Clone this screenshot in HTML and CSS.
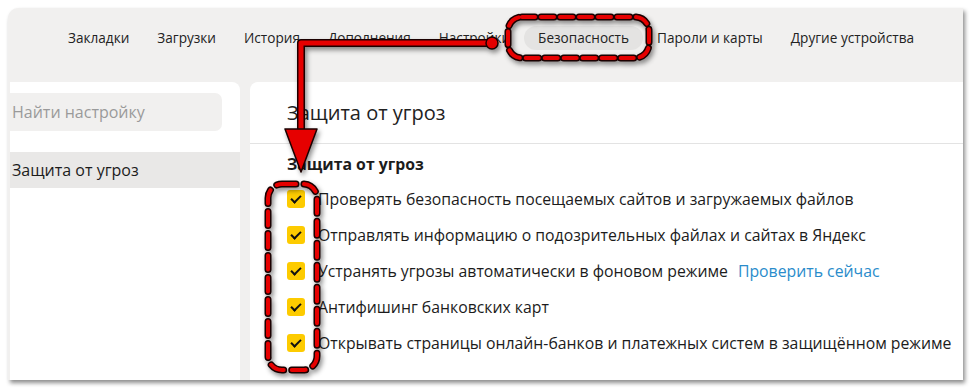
FILE: index.html
```html
<!DOCTYPE html>
<html lang="ru">

<head>
  <meta charset="utf-8">
  <title>Настройки — Безопасность</title>
  <link rel="stylesheet" href="styles.css">
</head>

<body>
  <div class="panel">
    <div class="nav">
      <span class="nav-item">Закладки</span>
      <span class="nav-item">Загрузки</span>
      <span class="nav-item">История</span>
      <span class="nav-item">Дополнения</span>
      <span class="nav-item">Настройки</span>
      <span class="nav-item active">Безопасность</span>
      <span class="nav-item">Пароли и карты</span>
      <span class="nav-item">Другие устройства</span>
    </div>

    <div class="content">
      <div class="sidebar">
        <div class="search">Найти настройку</div>
        <div class="side-item selected">Защита от угроз</div>
      </div>

      <div class="main">
        <div class="page-title">Защита от угроз</div>
        <div class="section">
          <div class="section-title">Защита от угроз</div>
          <div class="option"><span class="check"></span>Проверять безопасность посещаемых сайтов и загружаемых файлов</div>
          <div class="option"><span class="check"></span>Отправлять информацию о подозрительных файлах и сайтах в Яндекс</div>
          <div class="option"><span class="check"></span>Устранять угрозы автоматически в фоновом режиме<a class="link">Проверить сейчас</a></div>
          <div class="option"><span class="check"></span>Антифишинг банковских карт</div>
          <div class="option"><span class="check"></span>Открывать страницы онлайн-банков и платежных систем в защищённом режиме</div>
        </div>
      </div>
    </div>
  </div>

  <!-- red markup drawn over the screenshot -->
  <svg class="marks" width="973" height="390" viewBox="0 0 973 390">
    <defs>
      <filter id="shade" x="-20%" y="-20%" width="140%" height="140%">
        <feDropShadow dx="2" dy="3" stdDeviation="2.5" flood-color="#000" flood-opacity="0.45" />
      </filter>
    </defs>
    <g filter="url(#shade)" fill="none" stroke-linecap="round" stroke-linejoin="round">
      <rect x="508" y="17" width="141" height="41" rx="14" stroke="#1a0000" stroke-width="7" stroke-dasharray="13 6" />
      <rect x="508" y="17" width="141" height="41" rx="14" stroke="#e60000" stroke-width="4" stroke-dasharray="13 6" />

      <rect x="268" y="184" width="49" height="186" rx="14" stroke="#1a0000" stroke-width="7" stroke-dasharray="14 8" />
      <rect x="268" y="184" width="49" height="186" rx="14" stroke="#e60000" stroke-width="4" stroke-dasharray="14 8" />

      <path d="M492 43 H301 V132" stroke="#1a0000" stroke-width="8" />
      <path d="M492 43 H301 V132" stroke="#e60000" stroke-width="5" />
      <circle cx="492" cy="43" r="6" fill="#e60000" stroke="#1a0000" stroke-width="1.5" />
      <path d="M285 129 L317 129 L301 172 Z" fill="#e60000" stroke="#1a0000" stroke-width="1.5" />
    </g>
  </svg>
</body>

</html>
```

FILE: styles.css
```css
html,
body {
  margin: 0;
  padding: 0;
  background: #ffffff;
}

body {
  position: relative;
  width: 973px;
  height: 390px;
  overflow: hidden;
  font-family: "Open Sans", "Noto Sans", sans-serif;
  color: #1c1c1c;
}

.panel {
  margin: 8px 0 0 8px;
  width: 955px;
  height: 372px;
  background: #f1f0ef;
  border-top-left-radius: 10px;
  box-shadow: 2px 3px 4px rgba(0, 0, 0, 0.45);
  display: flex;
  flex-direction: column;
  overflow: hidden;
}

.nav {
  height: 74px;
  display: flex;
  align-items: flex-start;
  padding: 18px 0 0 46px;
  box-sizing: border-box;
  font-size: 13.6px;
}

.nav-item {
  padding: 0 14px;
  height: 24px;
  line-height: 24px;
  border-radius: 12px;
  color: #222;
  white-space: nowrap;
}

.nav-item.active {
  background: #e4e3e2;
}

.content {
  flex: 1;
  display: flex;
  gap: 10px;
  padding-left: 2px;
}

.sidebar {
  width: 230px;
  background: #ffffff;
  border-top-right-radius: 8px;
  padding-top: 11px;
}

.search {
  width: 210px;
  height: 38px;
  line-height: 38px;
  padding-left: 2px;
  background: #f1f0ef;
  border-radius: 0 7px 7px 0;
  color: #9a9a9a;
  font-size: 16px;
}

.side-item {
  margin-top: 21px;
  height: 36px;
  line-height: 36px;
  padding-left: 2px;
  font-size: 16px;
}

.side-item.selected {
  background: #e9e8e7;
}

.main {
  flex: 1;
  background: #ffffff;
  border-top-left-radius: 8px;
}

.page-title {
  height: 61px;
  line-height: 62px;
  padding-left: 37px;
  font-size: 20px;
  color: #222;
  border-bottom: 1px solid #e3e3e3;
}

.section {
  padding: 8px 0 0 37px;
  font-size: 15.8px;
}

.section-title {
  font-weight: 700;
  line-height: 24px;
  margin-bottom: 5px;
}

.option {
  display: flex;
  align-items: center;
  height: 36px;
  white-space: nowrap;
}

.check {
  position: relative;
  width: 18px;
  height: 18px;
  margin-right: 13px;
  border-radius: 3px;
  background: #fdcb00;
  flex: none;
}

.check::after {
  content: "";
  position: absolute;
  left: 6px;
  top: 3px;
  width: 4px;
  height: 8px;
  border: solid #111;
  border-width: 0 2px 2px 0;
  transform: rotate(45deg);
}

.link {
  margin-left: 10px;
  color: #2a8ccb;
}

.marks {
  position: absolute;
  left: 0;
  top: 0;
  pointer-events: none;
}
```
